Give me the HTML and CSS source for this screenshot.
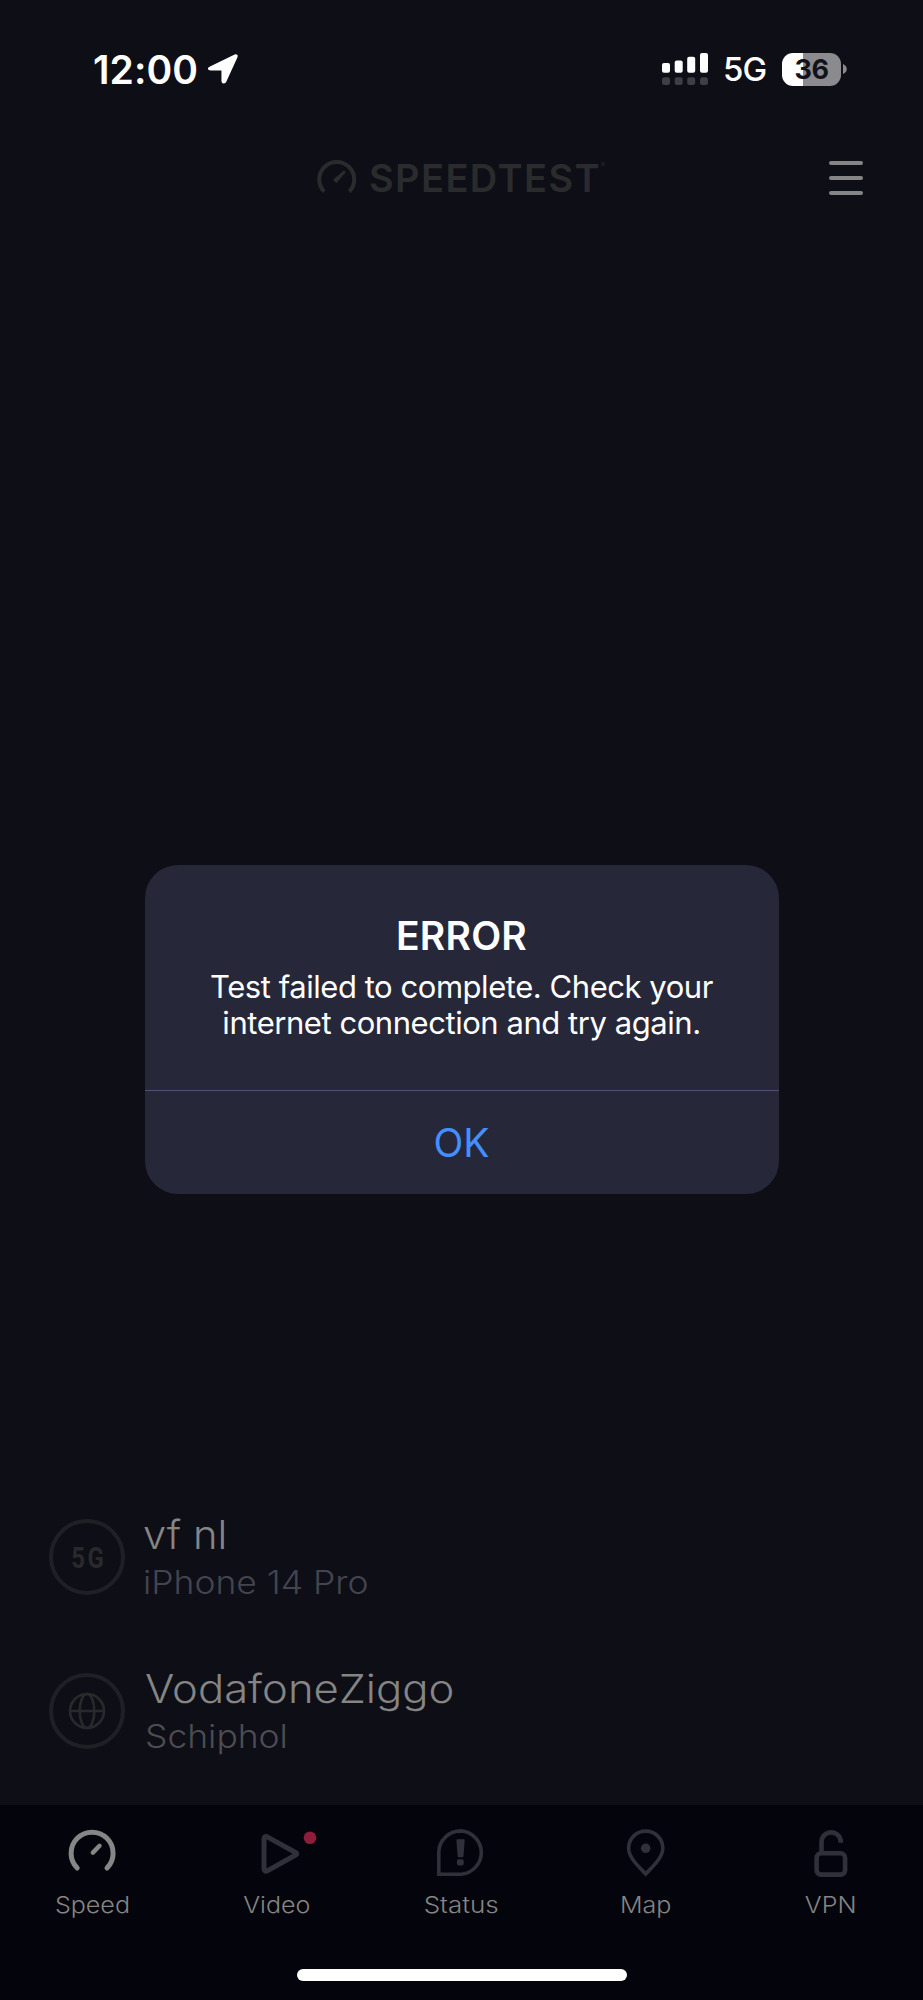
FILE: index.html
```html
<!DOCTYPE html>
<html lang="en">
<head>
<meta charset="utf-8">
<title>Speedtest</title>
<link rel="stylesheet" href="styles.css">
</head>
<body>
<div class="screen">
  <div class="statusbar">
    <span class="time">12:00</span>
    <svg class="location" width="32" height="32" viewBox="0 0 32 32"><path d="M2.8 14.4 28 2.2c1.500-.7 2.400.3 1.800 1.700L18.600 28.500c-.9 1.900-3.400 1.600-3.400-.6V17.500c0-.5-.2-.7-.7-.7H3.500c-2.200 0-2.500-1.600-.7-2.400Z" fill="#fff" stroke="#fff" stroke-width="1.500" stroke-linejoin="round"/></svg>
    <svg class="signal" width="46" height="32" viewBox="0 0 46 32">
      <g fill="#fff"><rect y="10" width="8" height="9.700" rx="2"/><rect x="12.700" y="7.500" width="8" height="12.200" rx="2"/><rect x="25.200" y="3.700" width="8" height="16" rx="2"/><rect x="38" width="8" height="19.700" rx="2"/></g>
      <g fill="#3e3e47"><rect y="24.200" width="8" height="7.800" rx="2.500"/><rect x="12.700" y="24.200" width="8" height="7.800" rx="2.500"/><rect x="25.200" y="24.200" width="8" height="7.800" rx="2.500"/><rect x="38" y="24.200" width="8" height="7.800" rx="2.500"/></g>
    </svg>
    <span class="network">5G</span>
    <div class="battery"><span class="level">36</span></div>
    <svg class="nub" width="4" height="12" viewBox="0 0 4 12"><path d="M0 1c5 2 5 8 0 10Z" fill="#8a8a8f"/></svg>
  </div>

  <header class="header">
    <div class="logo">
      <svg width="40" height="36" viewBox="0 0 40 36"><path d="M7.200 31.600A17.500 17.500 0 1 1 32.300 31.600" fill="none" stroke="#2a2b2d" stroke-width="4"/><path d="M16 19.800 27 10.300 28.800 12.200 19.300 23.300Z" fill="#2a2b2d"/></svg>
      <span class="brand">SPEEDTEST</span><span class="reg">®</span>
    </div>
    <div class="menu"><i></i><i></i><i></i></div>
  </header>

  <main class="content">
    <section class="row">
      <div class="badge"><span class="badge-text">5G</span></div>
      <div class="info"><div class="name vf">vf nl</div><div class="detail device">iPhone 14 Pro</div></div>
    </section>
    <section class="row second">
      <div class="badge"><svg width="38" height="38" viewBox="0 0 38 38" fill="none" stroke="#29292c" stroke-width="2.600"><circle cx="19" cy="19" r="17"/><ellipse cx="19" cy="19" rx="7.300" ry="17"/><path d="M2 19h34"/></svg></div>
      <div class="info"><div class="name isp">VodafoneZiggo</div><div class="detail city">Schiphol</div></div>
    </section>
  </main>

  <nav class="tabs">
    <div class="tab"><svg class="icon active" viewBox="0 0 48 48"><path d="M9.200 40A21 21 0 1 1 39 40" stroke-width="5"/><path d="M24.900 24.600 31.500 17.800" stroke-width="4.500"/></svg><span>Speed</span></div>
    <div class="tab"><svg class="icon" viewBox="0 0 48 48"><path d="M11 11.200v29.300c0 2.500 1.500 3.400 3.700 2.100L43 26.800c1-.6 1-1.500 0-2.100L14.700 9.100C12.500 7.800 11 8.700 11 11.200Z" stroke-width="5"/><circle class="dot" cx="57" cy="9.700" r="6.300"/></svg><span>Video</span></div>
    <div class="tab"><svg class="icon" viewBox="0 0 48 48"><path d="M1.800 46.200V24.600A22 21.800 0 0 1 23.800 2.900 22 21.700 0 0 1 23.800 46.200Z" stroke-width="3.600" stroke-linejoin="miter"/><path class="solid" d="M20.300 11.300h6.500q1 0 .9 1L26.500 28q-.1 1.300-1.200 1.300h-3.500q-1.100 0-1.200-1.300L19.400 12.300q-.1-1 .9-1Z"/><rect class="solid" x="20" y="31.200" width="6.700" height="6.200" rx="1.700"/></svg><span class="wide">Status</span></div>
    <div class="tab"><svg class="icon" viewBox="0 0 48 48"><path d="M23.700 46C17 38.800 6.600 29.800 6.600 20.200a17.100 17.100 0 0 1 34.200 0C40.800 29.800 30.400 38.800 23.700 46Z" stroke-width="3.600" stroke-linejoin="miter"/><circle class="solid" cx="23.700" cy="20.300" r="4.800"/></svg><span>Map</span></div>
    <div class="tab"><svg class="icon" viewBox="0 0 48 48"><rect x="9.600" y="25.200" width="28.500" height="21.400" rx="4.500" stroke-width="4.600"/><path d="M14.500 25V14A9.650 9.650 0 0 1 33.800 14v.7" stroke-width="4.600" stroke-linecap="butt"/></svg><span>VPN</span></div>
  </nav>
  <div class="home"><i></i></div>

  <div class="overlay">
    <div class="dialog" role="alertdialog">
      <div class="dialog-body">
        <h1>ERROR</h1>
        <p>Test failed to complete. Check your<br>internet connection and try again.</p>
      </div>
      <button class="ok">OK</button>
    </div>
  </div>
</div>
</body>
</html>
```
FILE: styles.css
```css
* { box-sizing: border-box; }
body { margin: 0; background: #0e0e17; font-family: Inter, "Liberation Sans", sans-serif; }
svg { display: block; flex: none; overflow: visible; }
.screen { position: relative; width: 923px; height: 2000px; display: flex; flex-direction: column; background: #0e0e17; overflow: hidden; white-space: nowrap; }

.statusbar { height: 138px; display: flex; align-items: center; padding: 0 76px 0 93px; color: #fff; }
.time { width: 114px; font-size: 39px; font-weight: 600; letter-spacing: 0.1px; }
.signal { margin-left: auto; }
.network { padding-left: 15px; box-sizing: content-box; width: 43px; font-size: 33px; font-weight: 500; letter-spacing: -1px; }
.battery { width: 59px; height: 33px; margin-left: 16px; border-radius: 11px; background: linear-gradient(90deg, #fff 21px, #8a8a8f 21px); display: flex; align-items: center; justify-content: center; }
.level { font-size: 27px; font-weight: 700; color: #12121a; letter-spacing: -0.5px; }
.nub { margin-left: 2px; }

.header { height: 80px; display: flex; align-items: center; padding: 0 60px 0 317px; }
.logo { display: flex; align-items: center; color: #2a2b2d; }
.brand { margin-left: 12px; font-size: 38px; font-weight: 600; line-height: 46px; letter-spacing: 1.4px; }
.reg { font-size: 6px; align-self: flex-start; margin-top: 6px; }
.menu { margin-left: auto; width: 34px; display: flex; flex-direction: column; gap: 11px; }
.menu i { height: 4px; border-radius: 2px; background: #858585; }

.content { flex: 1; display: flex; flex-direction: column; justify-content: flex-end; gap: 58px; padding: 0 49px 44px; }
.row { display: flex; height: 96px; }
.badge { width: 76px; height: 76px; margin-top: 8px; border: 4px solid #1f1f25; border-radius: 50%; display: flex; align-items: center; justify-content: center; }
.badge-text { font-family: Roboto, sans-serif; font-size: 30px; font-weight: 700; letter-spacing: 3px; margin-right: -3px; color: #29292c; transform: scaleX(0.8); }
.info { margin-left: 18px; }
.name, .detail { font-weight: 300; line-height: 48px; transform-origin: left center; }
.name { font-size: 39px; color: #858583; }
.vf { transform: scaleX(1.07); }
.isp { transform: scaleX(1.117); }
.detail { font-size: 32px; color: #44444f; transform: scaleX(1.108); }
.second .info { margin-left: 20px; }
.city { color: #4d4d50; }

.tabs { height: 145px; display: grid; grid-template-columns: repeat(5, 1fr); padding-top: 23px; background: #04040c; }
.tab { display: flex; flex-direction: column; align-items: center; gap: 14px; font-size: 23px; font-weight: 300; line-height: 30px; color: #858583; }
.tab span { transform: scaleX(1.09); }
.tab .wide { transform: scaleX(1.13); }
.icon { width: 48px; height: 48px; fill: none; stroke: #30303a; stroke-linecap: round; stroke-linejoin: round; }
.active { stroke: #868686; }
.solid { fill: #30303a; stroke: none; }
.dot { fill: #8d1d3a; stroke: none; }
.home { height: 50px; background: #04040c; display: flex; justify-content: center; padding-top: 19px; }
.home i { width: 330px; height: 12px; border-radius: 6px; background: #fff; }

.overlay { position: absolute; inset: 0; display: flex; justify-content: center; align-items: flex-start; padding-top: 865px; }
.dialog { width: 634px; height: 329px; border-radius: 33px; background: #27273a; display: flex; flex-direction: column; color: #fff; text-align: center; }
.dialog-body { height: 225px; padding-top: 48px; }
h1 { margin: 0; font-size: 39px; font-weight: 600; line-height: 46px; letter-spacing: 0.2px; }
p { margin: 10px 0 0; font-size: 31px; font-weight: 400; line-height: 36px; letter-spacing: -0.45px; }
.ok { flex: 1; padding: 0; border: 0; border-top: 1px solid #505071; background: none; font: 400 39px Inter, sans-serif; color: #4290ff; }
```
